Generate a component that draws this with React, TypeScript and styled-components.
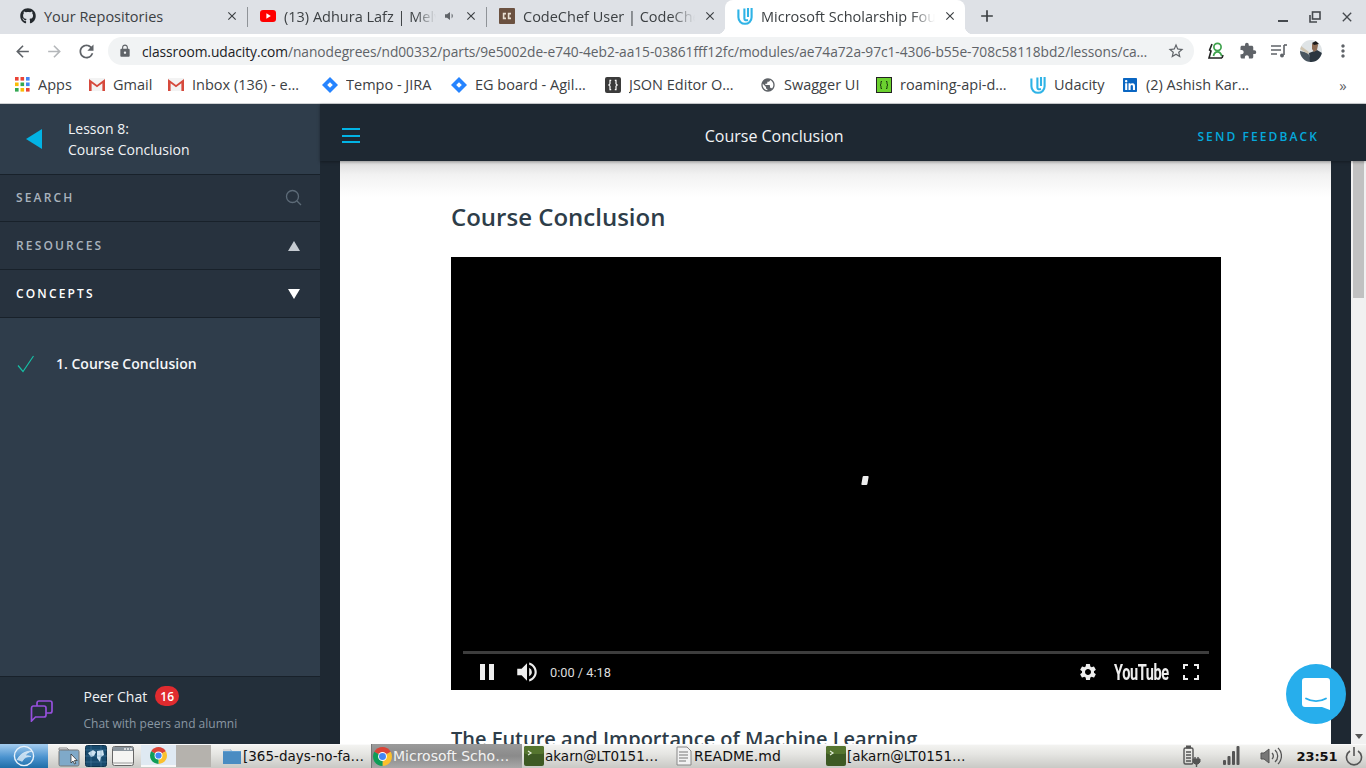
import React from "react";
import styled, { createGlobalStyle } from "styled-components";
import { FaGithub, FaLinkedin } from "react-icons/fa";
import {
  MdArrowBack, MdArrowForward, MdRefresh, MdLock, MdStarBorder, MdExtension, MdMoreVert,
  MdClose, MdAdd, MdSettings, MdVolumeUp, MdPublic,
} from "react-icons/md";

const Global = createGlobalStyle`
  html, body { margin: 0; padding: 0; height: 100%; overflow: hidden; background: #fff; }
  * { box-sizing: border-box; }
  #root { height: 100%; }
`;

const Screen = styled.div`
  width: 1366px; height: 768px; display: flex; flex-direction: column; overflow: hidden; position: relative;
  font-family: "Open Sans", "Noto Sans", sans-serif;
`;

/* browser chrome */
const TabStrip = styled.div`
  height: 34px; flex: none; background: #dee1e6; display: flex; padding-left: 8px; align-items: stretch; color: #3c4043;
`;
const Tab = styled.div<{ $w: number; $active?: boolean }>`
  width: ${p => p.$w}px; flex: none; display: flex; align-items: center; padding: 0 8px 2px 12px; gap: 8px; position: relative;
  ${p => p.$active ? `
    background: #fff; border-radius: 8px 8px 0 0;
    &::before, &::after { content: ""; position: absolute; bottom: 0; width: 8px; height: 8px; }
    &::before { left: -8px; background: radial-gradient(circle at 0 0, transparent 8px, #fff 8.5px); }
    &::after { right: -8px; background: radial-gradient(circle at 100% 0, transparent 8px, #fff 8.5px); }
  ` : ""}
`;
const TabTitle = styled.span<{ $fade?: boolean }>`
  flex: 1; min-width: 0; white-space: nowrap; font-size: 14.5px; color: #3c4043;
  ${p => p.$fade ? `-webkit-mask-image: linear-gradient(90deg, #000 86%, transparent 100%); mask-image: linear-gradient(90deg, #000 86%, transparent 100%);` : ""}
`;
const TabSep = styled.div`
  width: 1px; height: 20px; background: #8f9398; align-self: center; flex: none;
`;
const NewTab = styled.div`
  width: 44px; display: flex; align-items: center; justify-content: center; color: #3c4043; padding-bottom: 2px;
`;
const WinControls = styled.div`
  margin-left: auto; display: flex; align-items: center; color: #45494e; padding-right: 3px;
`;
const WinBtn = styled.div`
  width: 32px; height: 34px; display: flex; align-items: center; justify-content: center;
`;
const Toolbar = styled.div`
  height: 34px; flex: none; background: #fff; display: flex; align-items: center; padding-left: 6px; color: #5f6368;
`;
const NavBtn = styled.div<{ $dim?: boolean }>`
  width: 32px; height: 28px; display: flex; align-items: center; justify-content: center; flex: none;
  color: ${p => p.$dim ? "#b4b7ba" : "#5f6368"};
`;
const Omnibox = styled.div`
  width: 1086px; height: 28px; margin-left: 6px; border-radius: 14px; background: #f1f3f4; display: flex; align-items: center; padding-left: 10px; flex: none;
`;
const Url = styled.div`
  margin-left: 10px; font-size: 13.77px; white-space: nowrap; color: #5f6368; flex: 1; min-width: 0; letter-spacing: -.05px;
  b { font-weight: 400; color: #202124; }
`;
const StarSlot = styled.div`
  width: 36px; display: flex; justify-content: center; color: #5f6368; flex: none;
`;
const ExtRow = styled.div`
  display: flex; align-items: center; margin-left: 6px;
`;
const ExtSlot = styled.div`
  width: 31.7px; height: 28px; display: flex; align-items: center; justify-content: center; color: #5f6368;
`;
const Bookmarks = styled.div`
  height: 36px; flex: none; background: #fff; border-bottom: 1px solid #d0d2d4; display: flex; align-items: center; padding: 0 0 2px 15px; gap: 16px; position: relative;
`;
const Bookmark = styled.div`
  display: flex; align-items: center; gap: 8px; flex: none;
`;
const BookmarkLabel = styled.span<{ $w: number }>`
  width: ${p => p.$w}px; font-size: 14.5px; line-height: 20px; color: #3c4043; white-space: nowrap; overflow: hidden;
`;
const More = styled.div`
  margin-left: auto; width: 46px; text-align: center; font-size: 15px; color: #5f6368;
`;

/* page */
const Main = styled.div`
  flex: 1; min-height: 0; display: flex; background: #1e2832;
`;
const Sidebar = styled.aside`
  width: 320px; flex: none; background: #2f3d4b; display: flex; flex-direction: column; color: #fff; box-shadow: 1px 0 0 #1a222a;
`;
const LessonHead = styled.div`
  height: 71px; flex: none; display: flex; align-items: center; border-bottom: 1px solid #18212a; padding-left: 26px; gap: 26px;
`;
const LessonText = styled.div`
  font-size: 14px; line-height: 21px; color: #f2f4f6;
`;
const SideRow = styled.div<{ $bright?: boolean; $h?: number }>`
  height: ${p => p.$h ?? 48}px; flex: none; display: flex; align-items: center; justify-content: space-between; padding: 0 20px ${p => p.$h ? 1 : 0}px 16px;
  background: #27323e; border-bottom: 1px solid #18212a;
  font-size: 12px; font-weight: 600; letter-spacing: 2.15px; color: ${p => p.$bright ? "#fff" : "#a9b3bd"};
`;
const SearchSlot = styled.span`
  display: flex; margin-right: -2px;
`;
const ConceptList = styled.div`
  flex: 1; padding: 36px 0 0 17px;
`;
const ConceptRow = styled.div`
  display: flex; align-items: center; gap: 21px; font-size: 14px; font-weight: 600; color: #f4f6f8; line-height: 20px;
`;
const PeerChat = styled.div`
  height: 68px; flex: none; background: #232f3a; border-top: 1px solid #18212a; display: flex; padding-left: 30px; gap: 30px; align-items: flex-start; padding-top: 7px;
`;
const PeerIcon = styled.div`
  padding-top: 16px; width: 24px; flex: none;
`;
const PeerText = styled.div`
  display: flex; flex-direction: column;
`;
const PeerTitle = styled.div`
  display: flex; align-items: center; gap: 8px; font-size: 14px; color: #eef1f4; height: 24px; margin-left: -.5px;
`;
const Badge = styled.span`
  width: 24px; height: 20px; border-radius: 10px; background: #e02b2f; color: #fff; font-size: 12px; font-weight: 600; display: flex; align-items: center; justify-content: center;
`;
const PeerSub = styled.div`
  font-size: 12px; color: #8a97a3; margin-top: 7px; margin-left: -.5px;
`;
const Content = styled.div`
  flex: 1; min-width: 0; display: flex; flex-direction: column;
`;
const TopBar = styled.header`
  height: 57px; flex: none; background: #1e2832; display: flex; align-items: center; justify-content: space-between; padding: 6px 47px 0 22px; box-shadow: 0 1px 3px rgba(0,0,0,.35); position: relative; z-index: 2;
`;
const Burger = styled.div`
  width: 18px; height: 15px; display: flex; flex-direction: column; justify-content: space-between;
  i { display: block; height: 2px; background: #02b3e4; }
`;
const TopTitle = styled.div`
  font-size: 16px; color: #f2f4f6; margin-right: 9px;
`;
const Feedback = styled.div`
  font-size: 12px; font-weight: 600; letter-spacing: 2.1px; color: #05a8dc; padding-top: 1px;
`;
const Body = styled.div`
  flex: 1; min-height: 0; display: flex;
`;
const Canvas = styled.div`
  flex: 1; min-width: 0; padding: 0 20px; background: #1e2832;
`;
const Sheet = styled.main`
  height: 100%; background: linear-gradient(#dcdcdc 0, #f2f2f2 14px, #fff 36px); padding: 39px 110px 0 111px; overflow: hidden;
`;
const H1 = styled.h1`
  margin: 0; font-size: 24px; line-height: 33px; font-weight: 600; color: #2e3d49;
`;
const Video = styled.div`
  margin-top: 24px; width: 770px; height: 433px; background: #000; position: relative; display: flex; flex-direction: column; justify-content: flex-end;
`;
const Spinner = styled.i`
  position: absolute; left: 411px; top: 219px; width: 6px; height: 9px; background: #eee; transform: skewX(-10deg); border-radius: 1px;
`;
const Progress = styled.div`
  margin: 0 12px; height: 3px; background: #3d3d3d; flex: none;
`;
const Controls = styled.div`
  height: 36px; flex: none; display: flex; align-items: center; padding: 0 22px 0 29px; color: #eee;
`;
const Pause = styled.div`
  width: 14px; height: 16px; display: flex; justify-content: space-between; flex: none;
  i { width: 5px; background: #eee; display: block; }
`;
const VolumeSlot = styled.span`
  display: flex; margin-left: 20px;
`;
const Time = styled.span`
  font-family: Roboto, "Liberation Sans", sans-serif; font-size: 12.8px; color: #ddd; margin-left: 10px;
`;
const CtrlRight = styled.div`
  margin-left: auto; display: flex; align-items: center;
`;
const YouTubeMark = styled.span`
  display: inline-block; font-family: Roboto, "Liberation Sans", sans-serif; font-weight: 700; font-size: 22px; color: #eee; letter-spacing: -.6px; width: 52px; margin-left: 16px; white-space: nowrap; transform: scaleX(.66); transform-origin: 0 50%;
`;
const FullSlot = styled.span`
  width: 16px; margin-left: 17px; display: flex;
`;
const H2 = styled.h2`
  margin: 40px 0 0; font-size: 20px; line-height: 18px; font-weight: 600; color: #2e3d49; white-space: nowrap;
`;
const Scrollbar = styled.div`
  width: 15px; flex: none; background: #f1f1f1; padding: 0 2px; display: flex; flex-direction: column; justify-content: space-between;
`;
const Thumb = styled.div`
  height: 137px; background: #c1c1c1;
`;
const ScrollArrow = styled.div`
  width: 0; height: 0; margin: 0 auto 5px; border-left: 4px solid transparent; border-right: 4px solid transparent; border-top: 5px solid #555;
`;
const Bubble = styled.div`
  position: absolute; left: 1286px; top: 664px; width: 60px; height: 60px; border-radius: 50%; background: #27aeec; display: flex; align-items: center; justify-content: center; z-index: 3;
`;

/* desktop panel */
const Panel = styled.footer`
  height: 24px; flex: none; background: linear-gradient(#f4f4f2, #e6e6e3 40%, #c9c9c5); display: flex; align-items: center; font-family: "DejaVu Sans", sans-serif; position: relative;
  box-shadow: inset 0 1px 0 #fafafa;
`;
const StartBtn = styled.div`
  width: 48px; height: 24px; background: linear-gradient(#a5cdef, #4b93cf 55%, #1f6ea8); display: flex; align-items: center; justify-content: center; flex: none;
`;
const Launchers = styled.div`
  display: flex; align-items: center; gap: 3px; padding-left: 9px; flex: none;
`;
const Launcher = styled.div`
  width: 24px; height: 24px; display: flex; align-items: center; justify-content: center;
`;
const Pager = styled.div`
  display: flex; margin-left: 6px; height: 22px; flex: none;
`;
const PagerCell = styled.div<{ $on?: boolean }>`
  width: 35px; height: 22px; display: flex; align-items: center; justify-content: center;
  background: ${p => p.$on ? "#dfe9f2" : "#b5b2ad"};
  ${p => p.$on ? "border-bottom: 2px solid #f8f8f8;" : ""}
`;
const Tasks = styled.div`
  display: flex; margin-left: 9px; height: 24px; flex: none;
`;
const Task = styled.div<{ $active?: boolean }>`
  width: 151px; height: 24px; display: flex; align-items: center; gap: 1px; padding-left: 2px; flex: none;
  color: ${p => p.$active ? "#f2f2f2" : "#111"};
  ${p => p.$active ? "background: linear-gradient(#9b9b9b, #8a8a8a 50%, #a8a8a8); box-shadow: inset 1px 0 0 #777;" : ""}
`;
const TaskLabel = styled.span<{ $w?: number }>`
  font-size: ${p => p.$w ?? 13.5}px; white-space: nowrap; line-height: 18px;
`;
const Tray = styled.div`
  margin-left: auto; display: flex; align-items: center; color: #555;
`;
const TraySlot = styled.div<{ $w: number }>`
  width: ${p => p.$w}px; display: flex; justify-content: center; align-items: center; height: 24px;
`;
const Clock = styled.div`
  font-size: 13px; font-weight: 700; color: #111; width: 50px; text-align: center; letter-spacing: -.1px;
`;

const Chrome = ({ s = 16 }: { s?: number }) => (
  <svg width={s} height={s} viewBox="0 0 24 24">
    <path d="M12 12L1.61 6A12 12 0 0 1 22.39 6Z" fill="#db4437" />
    <path d="M12 12L22.39 6A12 12 0 0 1 12 24Z" fill="#fbc02d" />
    <path d="M12 12L12 24A12 12 0 0 1 1.61 6Z" fill="#0f9d58" />
    <circle cx="12" cy="12" r="5.6" fill="#fff" />
    <circle cx="12" cy="12" r="4.4" fill="#4285f4" />
  </svg>
);
const UdacityLogo = () => (
  <svg width="16" height="18" viewBox="0 0 16 18" fill="none" stroke="#2fb3e6" strokeWidth="2.1">
    <path d="M1.4 2.6v7.6c0 3.8 2.9 6.6 6.6 6.6s6.6-2.8 6.6-6.6V1" />
    <path d="M7.4 1.6v10.2c.2 1.5 1.6 1.8 3.6 1.2" />
    <path d="M11 1v9" />
  </svg>
);
const Gmail = () => (
  <svg width="16" height="13" viewBox="0 0 16 13">
    <rect x="0" y="0" width="16" height="13" fill="#f3f3f3" />
    <path d="M0 13V1l8 6 8-6v12h-2.6V5.2L8 9.2 2.6 5.2V13Z" fill="#d6493c" />
  </svg>
);
const Diamond = () => (
  <svg width="16" height="16" viewBox="0 0 16 16">
    <path d="M8 0l8 8-8 8-8-8Z" fill="#2684ff" />
    <path d="M8 5.2L10.8 8 8 10.8 5.2 8Z" fill="#fff" />
  </svg>
);
const AppsGrid = () => (
  <svg width="15" height="15" viewBox="0 0 15 15">
    {["#ea4335", "#ea4335", "#4285f4", "#fbbc05", "#34a853", "#4285f4", "#34a853", "#fbbc05", "#ea4335"].map((c, i) => (
      <rect key={i} x={(i % 3) * 5.5} y={Math.floor(i / 3) * 5.5} width="3.6" height="3.6" fill={c} />
    ))}
  </svg>
);
const JsonIcon = () => (
  <svg width="16" height="16" viewBox="0 0 16 16">
    <rect width="16" height="16" rx="2" fill="#3b3b3b" />
    <path d="M6.2 3.4H5v3.4L3.8 8 5 9.2v3.4h1.2M9.8 3.4H11v3.4L12.2 8 11 9.2v3.4H9.8" fill="none" stroke="#fff" strokeWidth="1.2" />
  </svg>
);
const RoamIcon = () => (
  <svg width="16" height="16" viewBox="0 0 16 16">
    <rect x=".5" y=".5" width="15" height="15" fill="#6bd12f" stroke="#222" />
    <path d="M6 4.5H5v2.7L4 8l1 .8v2.7h1M10 4.5h1v2.7l1 .8-1 .8v2.7h-1" fill="none" stroke="#1d3d10" strokeWidth="1" />
  </svg>
);
const CodeChef = () => (
  <svg width="16" height="16" viewBox="0 0 16 16">
    <rect width="16" height="16" rx="1" fill="#6b5140" />
    <path d="M7 5.6H4.6v4.8H7M12 5.6H9.6v4.8H12" fill="none" stroke="#e8dfd2" strokeWidth="1.6" />
  </svg>
);
const YouTubeFav = () => (
  <svg width="16" height="16" viewBox="0 0 16 16">
    <rect y="2" width="16" height="12" rx="3" fill="#f00" />
    <path d="M6.4 5.2l4.4 2.8-4.4 2.8Z" fill="#fff" />
  </svg>
);
const Speaker = () => (
  <svg width="12" height="12" viewBox="0 0 12 12" fill="#5f6368">
    <path d="M1 4.2h2L6 2v8L3 7.8H1Z" />
    <path d="M7.6 3.6a3 3 0 0 1 0 4.8Z" />
  </svg>
);
const ExtUser = () => (
  <svg width="18" height="20" viewBox="0 0 18 20" fill="none">
    <path d="M5 3L2.6 9 4 10 2 17h13" stroke="#222" strokeWidth="1.6" />
    <path d="M15 17l1-3" stroke="#222" strokeWidth="1.6" />
    <circle cx="10.5" cy="6" r="3.6" stroke="#3fa34d" strokeWidth="1.7" />
    <path d="M6.5 15c.5-2.8 2-4.2 4-4.2S14 12 14.6 15" stroke="#3fa34d" strokeWidth="1.7" />
  </svg>
);
const QueueMusic = () => (
  <svg width="18" height="16" viewBox="0 0 18 16" fill="none" stroke="#5f6368" strokeWidth="1.6">
    <path d="M1 3h10M1 7h10M1 11h6" />
    <path d="M14 2v10" />
    <path d="M14 2h3" />
    <circle cx="12" cy="12.4" r="2" fill="#5f6368" stroke="none" />
  </svg>
);
const Avatar = () => (
  <svg width="22" height="22" viewBox="0 0 22 22">
    <defs><clipPath id="av"><circle cx="11" cy="11" r="11" /></clipPath></defs>
    <g clipPath="url(#av)">
      <rect width="22" height="22" fill="#dfe4e6" />
      <path d="M0 11l8 2 4 9H0Z" fill="#4a5660" />
      <path d="M9 13l8-3 5 3v9H10Z" fill="#2b3640" />
      <path d="M12 4l4-2 2 3-1 5-3 2-2-3Z" fill="#8b6a52" />
      <path d="M12 3l4-2 3 3-5 1Z" fill="#1a1a1a" />
      <path d="M1 6l8 6-1 2-8-5Z" fill="#cfc4b0" />
    </g>
  </svg>
);
const Fullscreen = () => (
  <svg width="16" height="16" viewBox="0 0 16 16" fill="none" stroke="#eee" strokeWidth="2">
    <path d="M1 5V1h4M11 1h4v4M15 11v4h-4M5 15H1v-4" />
  </svg>
);
const MinIcon = () => <svg width="12" height="12" viewBox="0 0 12 12"><rect x="1" y="9" width="10" height="2" fill="currentColor" /></svg>;
const RestoreIcon = () => (
  <svg width="12" height="12" viewBox="0 0 12 12" fill="none" stroke="currentColor" strokeWidth="1.6">
    <rect x="3.5" y="1" width="7.5" height="7" /><path d="M1 4v7h7" />
  </svg>
);
const SearchIcon = () => (
  <svg width="17" height="17" viewBox="0 0 17 17" fill="none" stroke="#5d6b78" strokeWidth="1.3">
    <circle cx="7.5" cy="7.5" r="6" /><path d="M12 12l4 4" />
  </svg>
);
const Triangle = ({ up, color }: { up?: boolean; color: string }) => (
  <svg width="12" height="10" viewBox="0 0 12 10"><path d={up ? "M6 0l6 10H0Z" : "M0 0h12L6 10Z"} fill={color} /></svg>
);
const Check = () => (
  <svg width="18" height="18" viewBox="0 0 18 18" fill="none" stroke="#16bfa5" strokeWidth="1.2">
    <path d="M1 10.5l5 6L16.5 1" />
  </svg>
);
const ChatIcon = () => (
  <svg width="24" height="22" viewBox="0 0 24 22" fill="none" stroke="#9650dc" strokeWidth="1.7">
    <path d="M7 6V3a2 2 0 0 1 2-2h11a2 2 0 0 1 2 2v8a2 2 0 0 1-2 2h-4" />
    <path d="M3 6h11a2 2 0 0 1 2 2v7a2 2 0 0 1-2 2H5.5L1.5 21V8a2 2 0 0 1 1.5-2Z" />
  </svg>
);
const BubbleIcon = () => (
  <svg width="28" height="32" viewBox="0 0 28 32">
    <path d="M3 0h22a3 3 0 0 1 3 3v29l-8-3H3a3 3 0 0 1-3-3V3a3 3 0 0 1 3-3Z" fill="#fff" />
    <path d="M4 20.5c5.5 3.4 14.5 3.4 20 0" fill="none" stroke="#27aeec" strokeWidth="1.8" strokeLinecap="round" />
  </svg>
);
const StartLogo = () => (
  <svg width="24" height="22" viewBox="0 0 24 22" fill="none" stroke="#e8f2fa">
    <circle cx="12" cy="11" r="9.6" strokeWidth="1.4" />
    <path d="M5 15c3-6 8-9 15-9-4 1-6 3-7 5 2-.6 4-.4 6 .6-4-.2-7 1-9 5" fill="#e8f2fa" fillOpacity=".75" strokeWidth=".6" />
  </svg>
);
const FolderCursor = () => (
  <svg width="22" height="22" viewBox="0 0 22 22">
    <path d="M1 3h8l2 2h-10Z" fill="#eee" stroke="#777" strokeWidth=".8" />
    <rect x="1" y="5" width="20" height="16" rx="1.5" fill="#7fa9c9" stroke="#777" />
    <path d="M13 9v9l2-2 1.5 3 1.3-.6-1.4-2.9h2.8Z" fill="#fff" stroke="#222" strokeWidth=".7" />
  </svg>
);
const GlobeTile = () => (
  <svg width="22" height="22" viewBox="0 0 22 22">
    <rect x=".5" y=".5" width="21" height="21" rx="2" fill="#174a6d" stroke="#10334c" />
    <path d="M3 8l5-3 3 2-2 4-3 1ZM12 6l6-1 1 5-3 2-1 5-3-4Z" fill="#cfe4f1" />
    <path d="M0 5h22M0 11h22M0 17h22M6 0v22M16 0v22" stroke="#5b91b4" strokeWidth=".4" />
  </svg>
);
const WindowTile = () => (
  <svg width="22" height="22" viewBox="0 0 22 22">
    <rect x=".5" y="1.5" width="21" height="19" rx="2" fill="#f5f5f3" stroke="#666" />
    <rect x="1" y="2" width="20" height="4" fill="#8a949c" />
    <path d="M12 4h2M15 4h2M18 4h2" stroke="#eee" strokeWidth="1.4" />
    <path d="M1 18h20" stroke="#999" />
  </svg>
);
const FolderTask = () => (
  <svg width="20" height="20" viewBox="0 0 20 20">
    <path d="M1 3h7l2 2h9v13H1Z" fill="#5f9ed1" />
    <rect x="1" y="6" width="18" height="12" fill="#4a8cc2" />
    <path d="M1 3h7l1 2H1Z" fill="#d6d6d6" />
  </svg>
);
const TermIcon = () => (
  <svg width="20" height="20" viewBox="0 0 20 20">
    <rect width="20" height="20" rx="2" fill="#3e5a24" />
    <rect y="0" width="20" height="8" rx="2" fill="#55752f" />
    <path d="M4 5l3 2-3 2" fill="none" stroke="#e4eedb" strokeWidth="1.2" />
  </svg>
);
const DocIcon = () => (
  <svg width="18" height="20" viewBox="0 0 18 20">
    <path d="M2 1h10l4 4v14H2Z" fill="#f2f2f2" stroke="#888" />
    <path d="M4 6h9M4 9h9M4 12h9M4 15h7" stroke="#777" />
  </svg>
);
const Battery = () => (
  <svg width="20" height="22" viewBox="0 0 20 22" fill="none" stroke="#555">
    <rect x="2" y="3" width="9" height="16" rx="1.5" strokeWidth="1.4" />
    <rect x="4.5" y="1" width="4" height="2" fill="#555" />
    <path d="M4 7h5M4 10h5M4 13h5M4 16h5" strokeWidth="1.6" />
    <path d="M11 14h7v3l-2 2h-3l-2-2Z" fill="#555" />
    <path d="M13 12v2M16 12v2M14.5 19v3" strokeWidth="1.4" />
  </svg>
);
const Signal = () => (
  <svg width="18" height="20" viewBox="0 0 18 20" fill="#555">
    <rect x="1" y="14" width="3" height="5" rx="1" /><rect x="5.5" y="10" width="3" height="9" rx="1" />
    <rect x="10" y="5" width="3" height="14" rx="1" /><rect x="14.5" y="0" width="3" height="19" rx="1" />
  </svg>
);
const Volume = () => (
  <svg width="22" height="20" viewBox="0 0 22 20" fill="none" stroke="#555">
    <path d="M1 7h3l5-4v14l-5-4H1Z" fill="#777" />
    <path d="M12 7a4 4 0 0 1 0 6M15 4a8 8 0 0 1 0 12M18 2a11 11 0 0 1 0 16" strokeWidth="1.3" />
  </svg>
);
const Power = () => (
  <svg width="18" height="20" viewBox="0 0 18 20" fill="none" stroke="#555" strokeWidth="1.6">
    <path d="M5 5a7.5 7.5 0 1 0 8 0" /><path d="M9 1v9" />
  </svg>
);

const App = () => (
  <Screen>
    <Global />
    <TabStrip>
      <Tab $w={239}>
        <FaGithub size={16} color="#24292e" />
        <TabTitle>Your Repositories</TabTitle>
        <MdClose size={14} />
      </Tab>
      <TabSep />
      <Tab $w={238}>
        <YouTubeFav />
        <TabTitle $fade>(13) Adhura Lafz | Melv</TabTitle>
        <Speaker />
        <MdClose size={14} />
      </Tab>
      <TabSep />
      <Tab $w={238}>
        <CodeChef />
        <TabTitle $fade>CodeChef User | CodeChe</TabTitle>
        <MdClose size={14} />
      </Tab>
      <Tab $w={240} $active>
        <UdacityLogo />
        <TabTitle $fade>Microsoft Scholarship Fou</TabTitle>
        <MdClose size={14} />
      </Tab>
      <NewTab><MdAdd size={20} /></NewTab>
      <WinControls>
        <WinBtn><MinIcon /></WinBtn>
        <WinBtn><RestoreIcon /></WinBtn>
        <WinBtn><MdClose size={16} /></WinBtn>
      </WinControls>
    </TabStrip>

    <Toolbar>
      <NavBtn><MdArrowBack size={19} /></NavBtn>
      <NavBtn $dim><MdArrowForward size={19} /></NavBtn>
      <NavBtn><MdRefresh size={21} /></NavBtn>
      <Omnibox>
        <MdLock size={14} />
        <Url><b>classroom.udacity.com</b>/nanodegrees/nd00332/parts/9e5002de-e740-4eb2-aa15-03861fff12fc/modules/ae74a72a-97c1-4306-b55e-708c58118bd2/lessons/ca…</Url>
        <StarSlot><MdStarBorder size={18} /></StarSlot>
      </Omnibox>
      <ExtRow>
        <ExtSlot><ExtUser /></ExtSlot>
        <ExtSlot><MdExtension size={18} /></ExtSlot>
        <ExtSlot><QueueMusic /></ExtSlot>
        <ExtSlot><Avatar /></ExtSlot>
        <ExtSlot><MdMoreVert size={20} /></ExtSlot>
      </ExtRow>
    </Toolbar>

    <Bookmarks>
      <Bookmark><AppsGrid /><BookmarkLabel $w={35}>Apps</BookmarkLabel></Bookmark>
      <Bookmark><Gmail /><BookmarkLabel $w={39}>Gmail</BookmarkLabel></Bookmark>
      <Bookmark><Gmail /><BookmarkLabel $w={114}>Inbox (136) - e…</BookmarkLabel></Bookmark>
      <Bookmark><Diamond /><BookmarkLabel $w={89}>Tempo - JIRA</BookmarkLabel></Bookmark>
      <Bookmark><Diamond /><BookmarkLabel $w={114}>EG board - Agil…</BookmarkLabel></Bookmark>
      <Bookmark><JsonIcon /><BookmarkLabel $w={115}>JSON Editor O…</BookmarkLabel></Bookmark>
      <Bookmark><MdPublic size={16} color="#5f6368" /><BookmarkLabel $w={76}>Swagger UI</BookmarkLabel></Bookmark>
      <Bookmark><RoamIcon /><BookmarkLabel $w={114}>roaming-api-d…</BookmarkLabel></Bookmark>
      <Bookmark><UdacityLogo /><BookmarkLabel $w={52}>Udacity</BookmarkLabel></Bookmark>
      <Bookmark><FaLinkedin size={16} color="#0a66c2" /><BookmarkLabel $w={110}>(2) Ashish Kar…</BookmarkLabel></Bookmark>
      <More>»</More>
    </Bookmarks>

    <Main>
      <Sidebar>
        <LessonHead>
          <svg width="16" height="20" viewBox="0 0 16 20"><path d="M16 0v20L0 10Z" fill="#02b3e4" /></svg>
          <LessonText>Lesson 8:<br />Course Conclusion</LessonText>
        </LessonHead>
        <SideRow $h={47}>SEARCH<SearchSlot><SearchIcon /></SearchSlot></SideRow>
        <SideRow>RESOURCES<Triangle up color="#c5cbd1" /></SideRow>
        <SideRow $bright>CONCEPTS<Triangle color="#fff" /></SideRow>
        <ConceptList>
          <ConceptRow><Check />1. Course Conclusion</ConceptRow>
        </ConceptList>
        <PeerChat>
          <PeerIcon><ChatIcon /></PeerIcon>
          <PeerText>
            <PeerTitle>Peer Chat<Badge>16</Badge></PeerTitle>
            <PeerSub>Chat with peers and alumni</PeerSub>
          </PeerText>
        </PeerChat>
      </Sidebar>
      <Content>
        <TopBar>
          <Burger><i /><i /><i /></Burger>
          <TopTitle>Course Conclusion</TopTitle>
          <Feedback>SEND FEEDBACK</Feedback>
        </TopBar>
        <Body>
          <Canvas>
            <Sheet>
              <H1>Course Conclusion</H1>
              <Video>
                <Spinner />
                <Progress />
                <Controls>
                  <Pause><i /><i /></Pause>
                  <VolumeSlot><MdVolumeUp size={26} /></VolumeSlot>
                  <Time>0:00 / 4:18</Time>
                  <CtrlRight>
                    <MdSettings size={20} />
                    <YouTubeMark>YouTube</YouTubeMark>
                    <FullSlot><Fullscreen /></FullSlot>
                  </CtrlRight>
                </Controls>
              </Video>
              <H2>The Future and Importance of Machine Learning</H2>
            </Sheet>
          </Canvas>
          <Scrollbar>
            <Thumb />
            <ScrollArrow />
          </Scrollbar>
        </Body>
      </Content>
    </Main>

    <Bubble><BubbleIcon /></Bubble>

    <Panel>
      <StartBtn><StartLogo /></StartBtn>
      <Launchers>
        <Launcher><FolderCursor /></Launcher>
        <Launcher><GlobeTile /></Launcher>
        <Launcher><WindowTile /></Launcher>
      </Launchers>
      <Pager>
        <PagerCell $on><Chrome s={17} /></PagerCell>
        <PagerCell />
      </Pager>
      <Tasks>
        <Task><FolderTask /><TaskLabel>[365-days-no-fa…</TaskLabel></Task>
        <Task $active><Chrome s={19} /><TaskLabel $w={14}>Microsoft Scho…</TaskLabel></Task>
        <Task><TermIcon /><TaskLabel>akarn@LT0151…</TaskLabel></Task>
        <Task><DocIcon /><TaskLabel $w={14}>README.md</TaskLabel></Task>
        <Task><TermIcon /><TaskLabel>[akarn@LT0151…</TaskLabel></Task>
      </Tasks>
      <Tray>
        <TraySlot $w={40}><Battery /></TraySlot>
        <TraySlot $w={38}><Signal /></TraySlot>
        <TraySlot $w={42}><Volume /></TraySlot>
        <Clock>23:51</Clock>
        <TraySlot $w={24}><Power /></TraySlot>
      </Tray>
    </Panel>
  </Screen>
);

export default App;
